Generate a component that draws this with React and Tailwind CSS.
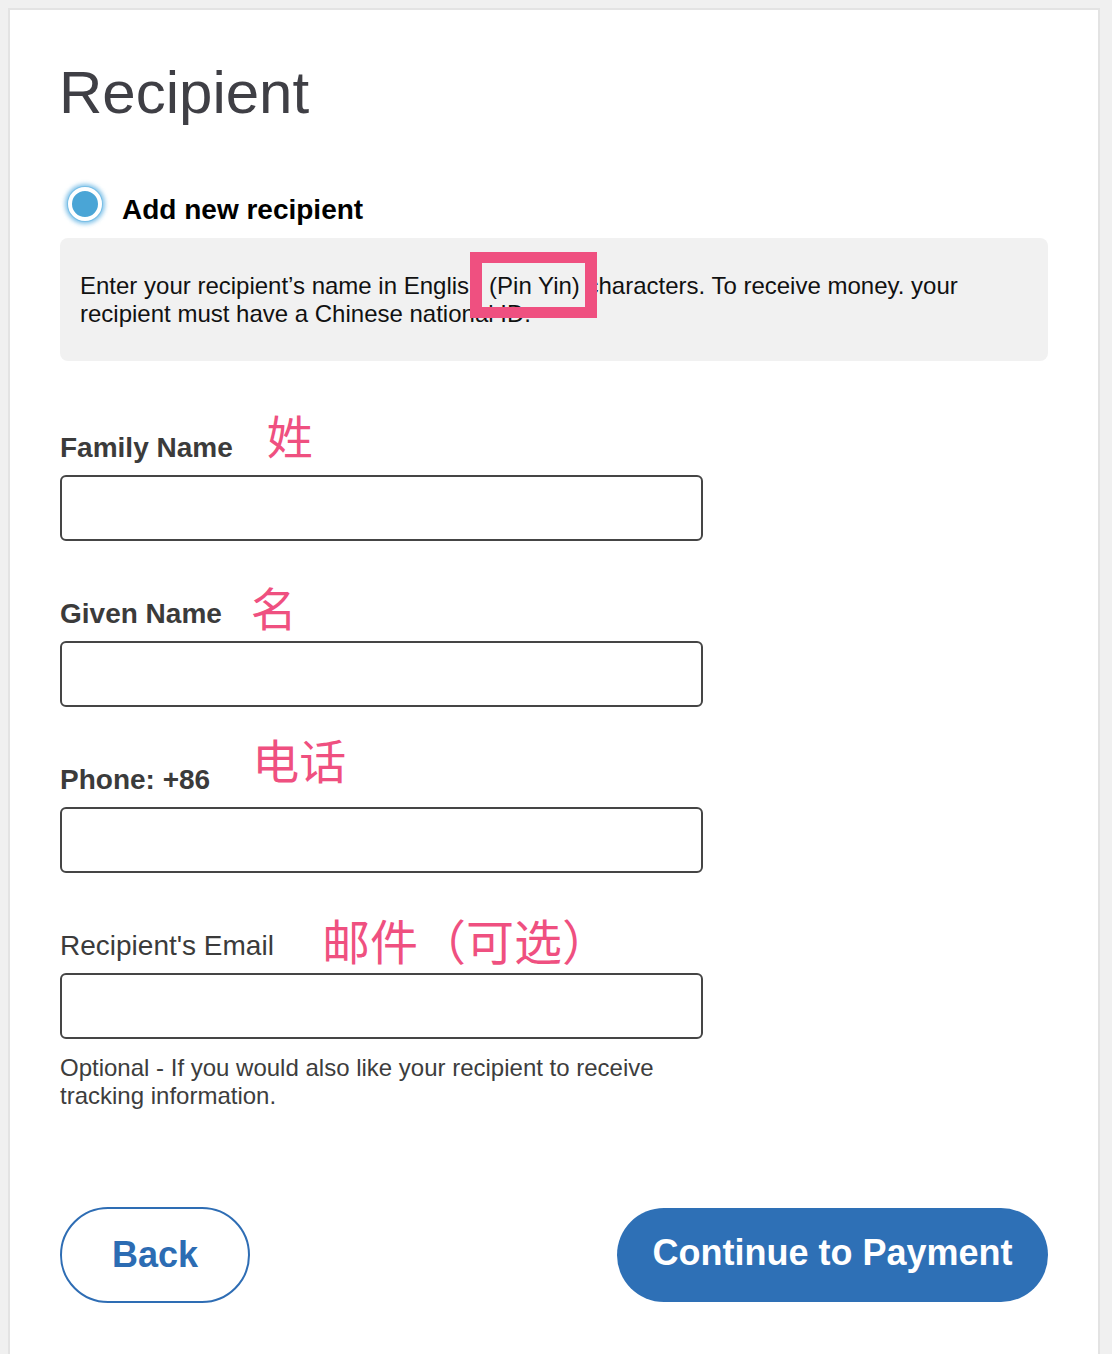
import React from "react";

const sans = { fontFamily: '"Liberation Sans", Arial, Helvetica, sans-serif' };

function Field({ label, bold = true, cn, cnClass, children }) {
  return (
    <div className="flex flex-col">
      <div
        className={`text-[28px] leading-[32px] ${bold ? "font-bold" : "font-normal"} text-[#3b3b3b] whitespace-nowrap`}
      >
        {label}
        <span
          className={`relative font-normal leading-[0] text-[#ef5080] font-['Noto_Sans_CJK_SC',sans-serif] ${cnClass}`}
        >
          {cn}
        </span>
      </div>
      <div className="mt-[11px] h-[66px] w-[643px] rounded-[6px] border-2 border-[#454545] bg-white" />
      {children}
    </div>
  );
}

export default function App() {
  return (
    <div className="min-h-[1354px] w-[1112px] overflow-hidden bg-[#f0f0f0] pl-[8px] pt-[8px]" style={sans}>
      <div className="w-[1092px] border-2 border-[#e3e3e3] bg-white px-[50px] pt-[53px] pb-[70px]">
        <h1 className="text-[60px] leading-[60px] font-normal text-[#3f3f45] -ml-[1px]">Recipient</h1>

        <div className="mt-[64px] flex h-[34px] items-center">
          <div className="ml-[8px] h-[34px] w-[34px] shrink-0 rounded-full border-[4px] border-white bg-[#4aa5d6] shadow-[0_0_0_1px_#79bfe6,0_0_4px_3px_rgba(90,175,225,0.75)]" />
          <span className="ml-[20px] mt-[12px] text-[28px] leading-[34px] font-bold text-black">Add new recipient</span>
        </div>

        <div className="relative mt-[17px] h-[123px] rounded-[8px] bg-[#f1f1f1] pl-[20px] pt-[34px] text-[24px] leading-[28px] text-[#111]">
          <p>
            Enter your recipient’s name in English (Pin Yin) characters. To receive money. your
            <br />
            recipient must have a Chinese national ID.
          </p>
          <div className="absolute left-[410px] top-[14px] h-[66px] w-[127px] border-x-[12px] border-y-[11px] border-[#ef5080]" />
        </div>

        <div className="mt-[71px] flex flex-col gap-[57px]">
          <Field label="Family Name" cn="姓" cnClass="ml-[34px] text-[46px] -top-[3px]" />
          <Field label="Given Name" cn="名" cnClass="ml-[29px] text-[46px] top-[3px]" />
          <Field label="Phone: +86" cn="电话" cnClass="ml-[42px] text-[47px] -top-[10px]" />
          <Field label="Recipient's Email" bold={false} cn="邮件（可选）" cnClass="ml-[48px] text-[48px] top-[5px]">
            <p className="mt-[15px] text-[24px] leading-[28px] text-[#3d3d3d]">
              Optional - If you would also like your recipient to receive
              <br />
              tracking information.
            </p>
          </Field>
        </div>

        <div className="mt-[97px] flex items-center justify-between">
          <button className="flex h-[96px] w-[190px] items-center justify-center rounded-full border-2 border-[#2e6db4] bg-white text-[36px] font-bold text-[#2c6cb3]">
            Back
          </button>
          <button className="flex h-[94px] w-[431px] items-center justify-center rounded-full bg-[#2e70b6] pb-[4px] text-[36px] font-bold text-white">
            Continue to Payment
          </button>
        </div>
      </div>
    </div>
  );
}
